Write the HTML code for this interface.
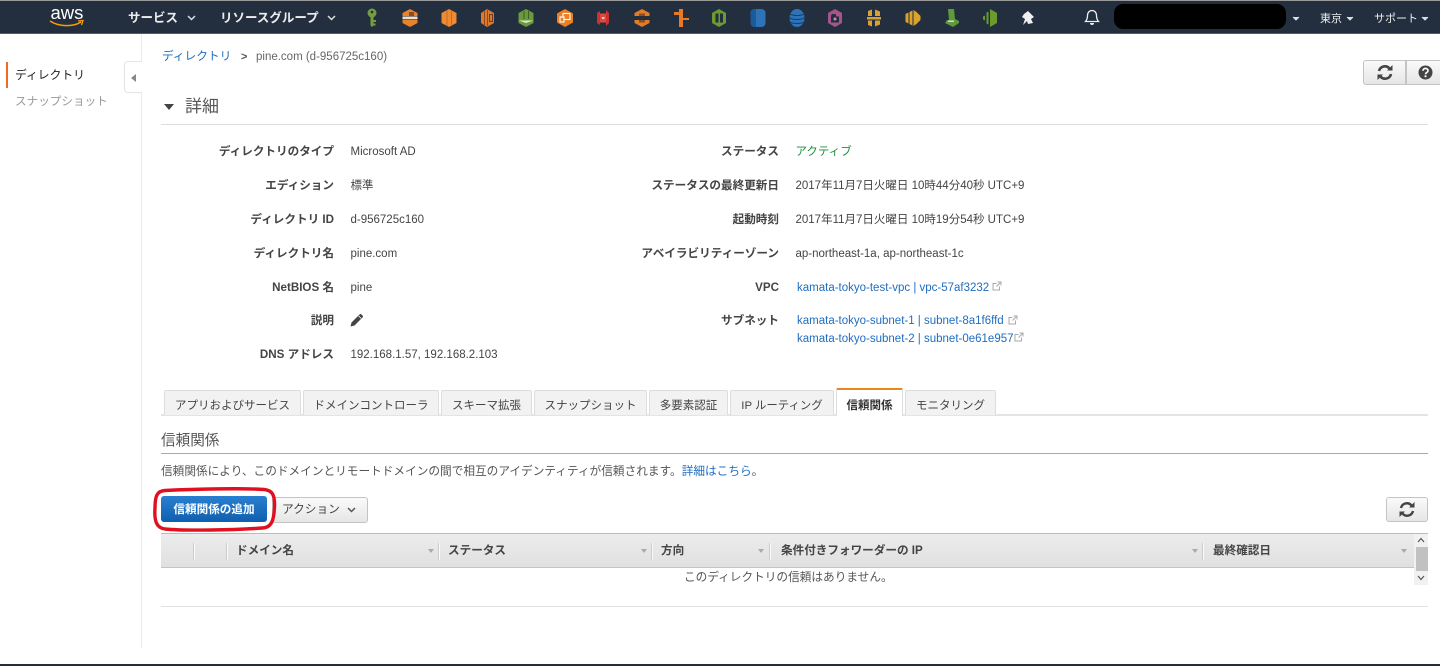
<!DOCTYPE html>
<html lang="ja"><head><meta charset="utf-8"><title>Directory</title>
<style>
html,body{margin:0;padding:0;background:#fff}
#p{position:relative;width:1440px;height:666px;overflow:hidden;background:#fff;font-family:"Liberation Sans","Noto Sans CJK JP",sans-serif;font-size:11.5px;color:#444}
.t{position:absolute;white-space:nowrap;line-height:16px}
.l{position:absolute;white-space:nowrap;line-height:16px;font-weight:bold;font-size:11.6px;color:#444;text-align:right}
.l1{right:1106px}.l2{right:661px}
a{color:#1f6dc0;text-decoration:none}
.b{position:absolute}
.tab{position:absolute;top:390px;height:25px;box-sizing:border-box;background:#f2f2f2;border:1px solid #ddd;border-bottom:0;border-radius:2px 2px 0 0;text-align:center;line-height:30px;font-size:11.5px;color:#444;white-space:nowrap}
.th{position:absolute;top:543px;line-height:16px;font-weight:bold;color:#444;white-space:nowrap;font-size:11.6px}
.sep{position:absolute;top:543px;width:1px;height:17px;background:#fafafa;border-left:1px solid #ccc}
.car{position:absolute;top:549px;width:0;height:0;border-left:3px solid transparent;border-right:3px solid transparent;border-top:4px solid #aaa}
.btn{position:absolute;box-sizing:border-box;background:linear-gradient(#fafafa,#e6e6e6);border:1px solid #c4c4c4;border-radius:3px}
svg{position:absolute;display:block}
.nav{position:absolute;white-space:nowrap;color:#eee;line-height:16px}
</style></head><body><div id="p">

<div class="b" style="left:0;top:0;width:1440px;height:34px;background:#232f3e"></div>
<div class="b" style="left:0;top:0;width:1440px;height:1px;background:#999"></div>
<div class="b" style="left:0;top:33px;width:1440px;height:1px;background:#525c68"></div>
<div class="b" style="left:0;top:664px;width:1440px;height:2px;background:#232f3e"></div>

<div class="nav" style="left:50.5px;top:4px;font-size:18.5px;color:#fff;line-height:18px">aws</div>
<svg style="left:49px;top:19px" width="36" height="9" viewBox="0 0 36 9"><path d="M1 2C10 8 24 8 32 3" fill="none" stroke="#f90" stroke-width="1.6"/><path d="M29 2L34 1.5L32.5 6" fill="none" stroke="#f90" stroke-width="1.3"/></svg>

<div class="nav" style="left:128px;top:10px;font-size:12.5px;font-weight:bold">サービス</div>
<svg style="left:187px;top:15px" width="9" height="6" viewBox="0 0 9 6"><path d="M1 1L4.5 4.5L8 1" fill="none" stroke="#ddd" stroke-width="1.5"/></svg>
<div class="nav" style="left:220px;top:10px;font-size:12.5px;font-weight:bold">リソースグループ</div>
<svg style="left:327px;top:15px" width="9" height="6" viewBox="0 0 9 6"><path d="M1 1L4.5 4.5L8 1" fill="none" stroke="#ddd" stroke-width="1.5"/></svg>

<svg style="left:0;top:0" width="1060" height="34" viewBox="0 0 1060 34">
<g transform="translate(372,18)"><circle cx="0" cy="-5" r="4.5" fill="#759c3e"/><circle cx="0" cy="-6" r="1.3" fill="#232f3e"/><path d="M-1.5-1h3V2h2.500V4h-2.500V5.500h2V7.500h-2L0 9-1.500 7.500z" fill="#759c3e"/></g>
<g transform="translate(410,18)"><path d="M0-9l7.500 4v3H-7.500v-3z" fill="#e8832c"/><path d="M-7.500 1.500H7.500V5L0 9-7.500 5z" fill="#e8832c"/><path d="M-7.500-1.500H7.500V1H-7.500z" fill="#f5dcc2"/><path d="M-1-6h5v4h-5z" fill="#8f4a20"/></g>
<g transform="translate(449,18)"><path d="M0-9l7.500 4V5L0 9-7.500 5V-5z" fill="#ee8a32"/><path d="M-2.500-8v16h1v-16zM2-8v16h1v-16z" fill="#c46a28"/></g>
<g transform="translate(488,18)"><path d="M-1-9L6-5V5L-1 9-7 5V-5z" fill="#d97a2e"/><path d="M-4-7V7h1V-7zM-1-8V8H0V-8z" fill="#8e4b22"/><rect x="1.500" y="-3.500" width="3" height="7" fill="none" stroke="#6d3a1c"/></g>
<g transform="translate(526,18)"><path d="M0-9l7.500 4V5L0 9-7.500 5V-5z" fill="#6b9a3a"/><path d="M-7.500 2.500H7.500L0 5z" fill="#dce8c8"/><path d="M-2.500-7V1h1V-7zM2-7V1h1V-7z" fill="#3d5f22"/></g>
<g transform="translate(565,18)"><path d="M0-9l8 4.500V4.500L0 9-8 4.500V-4.500z" fill="#ec7f23"/><rect x="-2" y="-4.500" width="7" height="6" fill="none" stroke="#fff" stroke-width="1.100"/><rect x="-5" y="-1" width="4" height="5" fill="#ec7f23" stroke="#fff" stroke-width="1.100"/></g>
<g transform="translate(603,18)"><path d="M-6-5l3-2V7L-6 5zM6-5L3-8V8L6 5z" fill="#c9352c"/><rect x="-3" y="-4.500" width="6" height="9" fill="#e0483c"/><rect x="-1" y="-1" width="2.500" height="2" fill="#f3c4bf"/></g>
<g transform="translate(642,18)"><path d="M-7.500-5L0-9l7.500 4v3h-15zM-7.500 2h15V5L0 9-7.500 5z" fill="#e27c27"/><rect x="-3" y="-4.500" width="6" height="2.500" fill="#8f4c1f"/><rect x="-3" y="2" width="6" height="2.500" fill="#8f4c1f"/></g>
<g transform="translate(681,18)"><path d="M-7-6h5V-9H2V9h-4V-3H-7z" fill="#e67a25"/><path d="M2 0h6V2H2z" fill="#e67a25"/></g>
<g transform="translate(719,18)"><path d="M0-9l7 4V5L0 9-7 5V-5z" fill="#6b9a30"/><rect x="-3.500" y="-4.500" width="3" height="9" fill="#232f3e"/><rect x="1" y="-4.500" width="3" height="9" fill="#232f3e"/></g>
<g transform="translate(758,18)"><rect x="-7.500" y="-9" width="15" height="18" rx="4" fill="#2e73b8"/><path d="M-7.500-5a4 4 0 0 1 4-4H-2V9h-1.500a4 4 0 0 1-4-4z" fill="#1c5a9a"/></g>
<g transform="translate(797,18)"><ellipse cx="0" cy="0" rx="7.500" ry="9" fill="#2e73b8"/><path d="M-7.500-4c4 2 11 2 15 0M-7.500 0c4 2 11 2 15 0M-7.500 4c4 2 11 2 15 0" fill="none" stroke="#12406f"/></g>
<g transform="translate(835,18)"><path d="M0-9l7 4V5L0 9-7 5V-5z" fill="#a6558c"/><path d="M-3-4H1v2.500H4V4.500H-4V-2.500z" fill="#232f3e"/><circle cx="0" cy="1" r="1.500" fill="#c98ab6"/></g>
<g transform="translate(874,18)" fill="#d9a12f"><path d="M-6-7l4-1.500V-2H-6zM1-8.500L6-6.500V-2H1zM-7-1H7V1.500H-7zM-6 2.500h4V8.500L-6 7zM1 2.500H6V6.500L1 8.500z"/></g>
<g transform="translate(913,18)" fill="#dba22e"><path d="M-7.500-4l3-1.500V5.500L-7.500 4zM-3.500-6l3-1.500V7.500L-3.500 6zM.5-8l3 2 4 4V2L3.500 6l-3 2z"/></g>
<g transform="translate(952,18)"><path d="M-4-9H2L3 1l4 2V5L1 9-7 5-5 2H-3z" fill="#5e9a3c"/><path d="M-4 2.500H2v1.500H-4z" fill="#cfe0bd"/></g>
<g transform="translate(990,18)" fill="#6b9a30"><path d="M0-9l7 4V5L0 9zM-1.500-6.500V6.500L-3.500 5.500V-5.500zM-5-2.500V2.500L-7 1.500V-1.500z"/></g>
<g transform="translate(1029,18)"><path d="M-5-4L-1-7 5-1 2 1 4 5-1 6-2 3-6 7-4 1-7-1z" fill="#f0f0f0"/></g>
</svg>

<svg style="left:1084px;top:9px" width="16" height="17" viewBox="0 0 16 17"><path d="M8 1.5c-3 0-4.500 2.500-4.500 5 0 3-.8 4.500-2 6h13c-1.200-1.500-2-3-2-6 0-2.500-1.500-5-4.500-5z" fill="none" stroke="#eee" stroke-width="1.300"/><path d="M6 14a2 2 0 0 0 4 0z" fill="#eee"/></svg>
<div class="b" style="left:1114px;top:4px;width:172px;height:25px;background:#000;border-radius:9px"></div>
<svg style="left:1292px;top:16px" width="8" height="5" viewBox="0 0 8 5"><path d="M1 1L4 4L7 1" fill="#ddd" stroke="#ddd"/></svg>
<div class="nav" style="left:1320px;top:11px;font-size:11px">東京</div>
<svg style="left:1346px;top:16px" width="8" height="5" viewBox="0 0 8 5"><path d="M1 1L4 4L7 1" fill="#ddd" stroke="#ddd"/></svg>
<div class="nav" style="left:1374px;top:11px;font-size:11px">サポート</div>
<svg style="left:1421px;top:16px" width="8" height="5" viewBox="0 0 8 5"><path d="M1 1L4 4L7 1" fill="#ddd" stroke="#ddd"/></svg>

<!-- side nav -->
<div class="b" style="left:141px;top:34px;width:1px;height:614px;background:#ececec"></div>
<div class="b" style="left:6px;top:62px;width:2px;height:26px;background:#f26a1b"></div>
<div class="t" style="left:15px;top:67px;font-size:11.8px;color:#222">ディレクトリ</div>
<div class="t" style="left:15px;top:94px;font-size:11.6px;color:#999">スナップショット</div>
<div class="b" style="left:124px;top:61px;width:18px;height:32px;box-sizing:border-box;border:1px solid #e4e4e4;border-right:0;border-radius:4px 0 0 4px;background:#fff"></div>
<div class="b" style="left:131px;top:74px;width:0;height:0;border-top:4.500px solid transparent;border-bottom:4.500px solid transparent;border-right:5px solid #888"></div>

<!-- breadcrumb -->
<div class="t" style="left:162px;top:49px;font-size:11.7px"><a>ディレクトリ</a></div>
<div class="t" style="left:241px;top:49px;font-size:11px;color:#555;font-weight:bold">&gt;</div>
<div class="t" style="left:256px;top:49px;color:#666">pine.com (d-956725c160)</div>

<!-- top right buttons -->
<div class="btn" style="left:1363px;top:60px;width:43px;height:25px;border-radius:3px 0 0 3px"></div>
<div class="btn" style="left:1406px;top:60px;width:36px;height:25px;border-radius:0"></div>
<svg style="left:1376px;top:64px" width="18" height="17" viewBox="0 0 18 17"><path d="M3 7a6 6 0 0 1 10.500-2.500M15 10a6 6 0 0 1-10.500 2.500" fill="none" stroke="#444" stroke-width="2.600"/><path d="M11 6.500h5.500V1zM7 10.500H1.500V16z" fill="#444"/></svg>
<svg style="left:1418px;top:65px" width="15" height="15" viewBox="0 0 15 15"><circle cx="7.5" cy="7.5" r="7" fill="#444"/><path d="M5 5.700c0-3 5-3 5 0 0 2-2.500 1.800-2.500 3.600" fill="none" stroke="#fff" stroke-width="1.700"/><rect x="6.600" y="10.300" width="1.900" height="1.900" fill="#fff"/></svg>

<!-- section heading -->
<div class="b" style="left:164px;top:104px;width:0;height:0;border-left:5px solid transparent;border-right:5px solid transparent;border-top:6px solid #444"></div>
<div class="t" style="left:185px;top:97px;font-size:17px;line-height:20px;color:#555">詳細</div>
<div class="b" style="left:161px;top:124px;width:1267px;height:1px;background:#ddd"></div>

<!-- details -->
<div class="l l1" style="top:144px">ディレクトリのタイプ</div><div class="t" style="left:350.5px;top:144px">Microsoft AD</div>
<div class="l l1" style="top:178px">エディション</div><div class="t" style="left:350.5px;top:178px">標準</div>
<div class="l l1" style="top:212px">ディレクトリ ID</div><div class="t" style="left:350.5px;top:212px">d-956725c160</div>
<div class="l l1" style="top:246px">ディレクトリ名</div><div class="t" style="left:350.5px;top:246px">pine.com</div>
<div class="l l1" style="top:280px">NetBIOS 名</div><div class="t" style="left:350.5px;top:280px">pine</div>
<div class="l l1" style="top:313px">説明</div>
<svg style="left:350px;top:313px" width="14" height="14" viewBox="0 0 14 14"><path d="M0.5 13.5L1.500 9.500L9.500 1.500a1.400 1.400 0 0 1 2 0l1 1a1.400 1.400 0 0 1 0 2L4.500 12.500z" fill="#444"/><path d="M8.500 2.800l2.700 2.700" stroke="#fff" stroke-width=".8"/></svg>
<div class="l l1" style="top:347px">DNS アドレス</div><div class="t" style="left:350.5px;top:347px">192.168.1.57, 192.168.2.103</div>

<div class="l l2" style="top:144px">ステータス</div><div class="t" style="left:795.5px;top:144px;color:#1d8f3d">アクティブ</div>
<div class="l l2" style="top:178px">ステータスの最終更新日</div><div class="t" style="left:795.5px;top:178px">2017年11月7日火曜日 10時44分40秒 UTC+9</div>
<div class="l l2" style="top:212px">起動時刻</div><div class="t" style="left:795.5px;top:212px">2017年11月7日火曜日 10時19分54秒 UTC+9</div>
<div class="l l2" style="top:246px">アベイラビリティーゾーン</div><div class="t" style="left:795.5px;top:246px">ap-northeast-1a, ap-northeast-1c</div>
<div class="l l2" style="top:280px">VPC</div><div class="t" style="left:797px;top:280px"><a>kamata-tokyo-test-vpc | vpc-57af3232</a></div>
<div class="l l2" style="top:313px">サブネット</div>
<div class="t" style="left:797px;top:313px"><a>kamata-tokyo-subnet-1 | subnet-8a1f6ffd</a></div>
<div class="t" style="left:797px;top:331px"><a>kamata-tokyo-subnet-2 | subnet-0e61e957</a></div>
<svg style="left:992px;top:281px" width="10" height="10" viewBox="0 0 10 10"><path d="M7.500 5.500V9H1V2.500h3.500M5.500 1H9v3.500M9 1L4.500 5.500" fill="none" stroke="#aaa"/></svg>
<svg style="left:1008px;top:315px" width="10" height="10" viewBox="0 0 10 10"><path d="M7.500 5.500V9H1V2.500h3.500M5.500 1H9v3.500M9 1L4.500 5.500" fill="none" stroke="#aaa"/></svg>
<svg style="left:1014px;top:332px" width="10" height="10" viewBox="0 0 10 10"><path d="M7.500 5.500V9H1V2.500h3.500M5.500 1H9v3.500M9 1L4.500 5.500" fill="none" stroke="#aaa"/></svg>

<!-- tabs -->
<div class="b" style="left:161px;top:414px;width:1267px;height:2px;background:#e4e4e4"></div>
<div class="tab" style="left:164px;width:137px">アプリおよびサービス</div>
<div class="tab" style="left:303px;width:136px">ドメインコントローラ</div>
<div class="tab" style="left:441px;width:91px">スキーマ拡張</div>
<div class="tab" style="left:534px;width:113px">スナップショット</div>
<div class="tab" style="left:649px;width:79px">多要素認証</div>
<div class="tab" style="left:730px;width:104px;font-size:11.4px">IP ルーティング</div>
<div class="tab" style="left:836px;top:388px;height:28px;width:67px;background:#fff;border:1px solid #ddd;border-top:2px solid #e8861f;border-bottom:0;line-height:33px;font-weight:bold;color:#333">信頼関係</div>
<div class="tab" style="left:905px;width:91px">モニタリング</div>

<!-- trust section -->
<div class="t" style="left:161px;top:432px;font-size:14.6px;line-height:18px;color:#555">信頼関係</div>
<div class="b" style="left:161px;top:453px;width:1267px;height:1px;background:#aaa"></div>
<div class="t" style="left:161px;top:464px;font-size:11.66px;color:#555">信頼関係により、このドメインとリモートドメインの間で相互のアイデンティティが信頼されます。<a>詳細はこちら</a>。</div>

<div class="b" style="left:161px;top:496px;width:106px;height:26px;border-radius:3px;background:linear-gradient(#2a80d0,#0f5fb0)"></div>
<div class="t" style="left:161px;top:502px;width:106px;text-align:center;font-size:11.6px;font-weight:bold;color:#fff">信頼関係の追加</div>
<div class="btn" style="left:272px;top:497px;width:96px;height:26px"></div>
<div class="t" style="left:282px;top:502px;font-size:11.7px;color:#444">アクション</div>
<svg style="left:347px;top:507px" width="9" height="6" viewBox="0 0 9 6"><path d="M1 1L4.500 4.500L8 1" fill="none" stroke="#555" stroke-width="1.500"/></svg>
<svg style="left:150px;top:486px" width="128" height="48" viewBox="0 0 128 48"><path d="M15 4.500C45 3 95 2 114 3.500c8 .8 11 5 10.500 17-.5 14-3 21-12 21.500C85 44 35 45 15 43 7 42 4 36 5 22 5 10 7 5 15 4.500z" fill="none" stroke="#e01020" stroke-width="3.400"/></svg>
<div class="btn" style="left:1386px;top:497px;width:42px;height:25px"></div>
<svg style="left:1398px;top:501px" width="18" height="17" viewBox="0 0 18 17"><path d="M3 7a6 6 0 0 1 10.500-2.500M15 10a6 6 0 0 1-10.500 2.500" fill="none" stroke="#444" stroke-width="2.400"/><path d="M11 6.500h5.500V1zM7 10.500H1.500V16z" fill="#444"/></svg>

<!-- table -->
<div class="b" style="left:161px;top:533px;width:1253px;height:35px;box-sizing:border-box;background:linear-gradient(#ececec,#e0e0e0);border-top:1px solid #bbb;border-bottom:1px solid #c4c4c4"></div>
<div class="b" style="left:1414px;top:533px;width:14px;height:1px;background:#bbb"></div>
<div class="sep" style="left:193px"></div><div class="sep" style="left:226px"></div>
<div class="th" style="left:236px">ドメイン名</div><div class="car" style="left:428px"></div><div class="sep" style="left:438px"></div>
<div class="th" style="left:448px">ステータス</div><div class="car" style="left:641px"></div><div class="sep" style="left:651px"></div>
<div class="th" style="left:661px">方向</div><div class="car" style="left:758px"></div><div class="sep" style="left:769px"></div>
<div class="th" style="left:781px">条件付きフォワーダーの IP</div><div class="car" style="left:1192px"></div><div class="sep" style="left:1202px"></div>
<div class="th" style="left:1213px">最終確認日</div><div class="car" style="left:1401px"></div>
<div class="t" style="left:684px;top:570px;font-size:11.66px;color:#555">このディレクトリの信頼はありません。</div>
<div class="b" style="left:1414px;top:534px;width:14px;height:51px;background:#f1f1f1"></div>
<div class="b" style="left:1416px;top:547px;width:12px;height:24px;background:#c1c1c1"></div>
<svg style="left:1417px;top:537px" width="8" height="6" viewBox="0 0 8 6"><path d="M1 5L4 1.500L7 5" fill="none" stroke="#555" stroke-width="1.200"/></svg>
<svg style="left:1417px;top:575px" width="8" height="6" viewBox="0 0 8 6"><path d="M1 1L4 4.500L7 1" fill="none" stroke="#555" stroke-width="1.200"/></svg>
<div class="b" style="left:161px;top:606px;width:1267px;height:1px;background:#e2e2e2"></div>

</div></body></html>
